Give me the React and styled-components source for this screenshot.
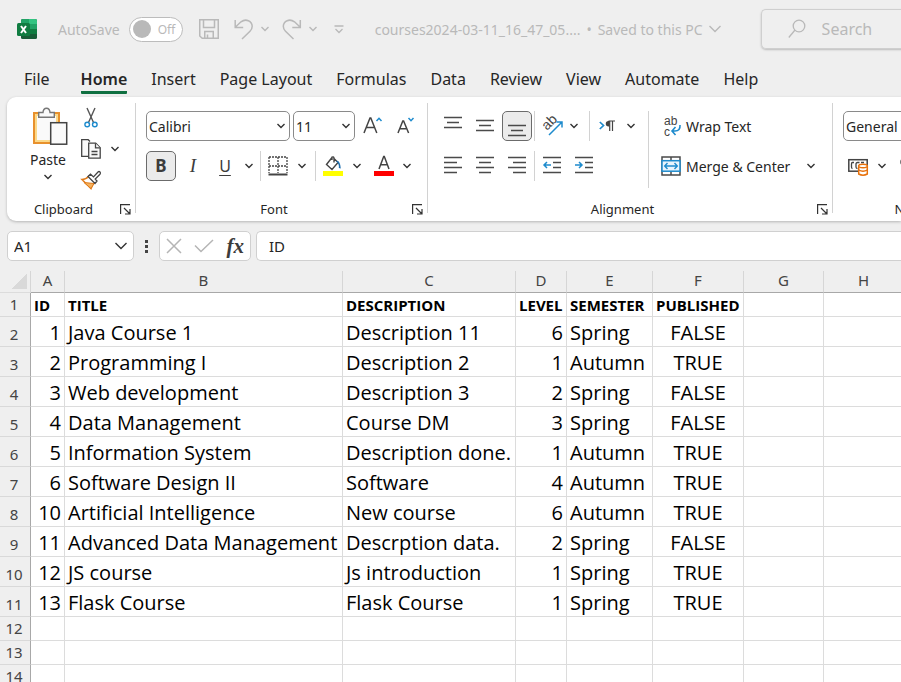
import React from 'react';
import styled, { createGlobalStyle, css } from 'styled-components';

const GlobalStyle = createGlobalStyle`
  *, *::before, *::after { box-sizing: border-box; }
  html, body { margin: 0; padding: 0; height: 100%; overflow: hidden; }
  body { background: #efefef; color: #262626; font-family: "Noto Sans", "Open Sans", sans-serif; }
  button, input, select { font: inherit; color: inherit; margin: 0; padding: 0; border: 0; background: none; }
  svg { display: block; flex: none; overflow: visible; }
`;

const Window = styled.div`
  display: flex;
  flex-direction: column;
  height: 100vh;
  overflow: hidden;
  background: #efefef;
`;

/* ---------- title bar ---------- */

const TitleBar = styled.header`
  display: flex;
  align-items: center;
  flex: none;
  height: 58px;
  padding-left: 17px;
  font-size: 14px;
  color: #b9b9b9;
  white-space: nowrap;
`;

const AutoSave = styled.label`
  display: flex;
  align-items: center;
  gap: 9px;
  margin-left: 21px;
`;

const Switch = styled.span`
  display: flex;
  align-items: center;
  gap: 7px;
  width: 54px;
  height: 25px;
  padding-left: 3px;
  border: 1px solid #bcbcbc;
  border-radius: 13px;
  background: #fff;
  font-size: 12px;
`;

const SwitchInput = styled.input`
  appearance: none;
  width: 18px;
  height: 18px;
  border-radius: 50%;
  background: #b9b9b9;
`;

const QuickTools = styled.div`
  display: flex;
  align-items: center;
  gap: 6px;
  margin-left: 14px;
`;

const SplitButton = styled.div`
  display: flex;
`;

const QuickButton = styled.button`
  display: flex;
  align-items: center;
  justify-content: center;
  width: ${(p) => p.$width}px;
  height: 30px;
`;

const DocumentButton = styled.button`
  display: flex;
  align-items: center;
  gap: 6px;
  margin-left: 20px;
`;

const SearchBox = styled.label`
  display: flex;
  align-items: center;
  flex: 1 0 138px;
  gap: 16px;
  height: 40px;
  margin-left: 40px;
  padding-left: 26px;
  border: 1px solid #cfcfcf;
  border-right: 0;
  border-radius: 5px 0 0 5px;
  box-shadow: 0 1px 2px #bbb;
`;

const SearchInput = styled.input`
  flex: 1;
  min-width: 0;
  font-size: 16px;
  outline: 0;
  &::placeholder { color: #b9b9b9; opacity: 1; }
`;

/* ---------- tabs ---------- */

const Tabs = styled.nav`
  display: flex;
  align-items: flex-start;
  flex: none;
  gap: 24px;
  height: 39px;
  padding: 9px 0 0 24px;
  font-size: 16px;
  line-height: 24px;
  white-space: nowrap;
`;

const Tab = styled.button`
  height: 27px;
  border-bottom: 3px solid transparent;
  ${(p) => p.$first && css`margin-right: 7px;`}
  ${(p) => p.$active && css`
    font-weight: 600;
    border-bottom-color: #107041;
    border-radius: 1px;
  `}
`;

/* ---------- ribbon ---------- */

const Ribbon = styled.section`
  display: flex;
  flex: none;
  height: 124px;
  margin-left: 7px;
  padding: 6px 0 8px;
  border-radius: 9px 0 0 9px;
  background: #fff;
  box-shadow: 0 1px 3px #b5b5b5;
  overflow: hidden;
  font-size: 14px;
  white-space: nowrap;
`;

const Group = styled.section`
  display: flex;
  flex-direction: column;
  flex: none;
  width: ${(p) => p.$width}px;
  border-right: 1px solid #d2d2d2;
`;

const GroupBody = styled.div`
  display: flex;
  flex: 1;
  min-height: 0;
  flex-direction: ${(p) => (p.$stack ? 'column' : 'row')};
  gap: ${(p) => (p.$stack ? 10 : 0)}px;
  padding: ${(p) => p.$top}px 0 0 ${(p) => p.$left}px;
`;

const GroupFooter = styled.footer`
  display: grid;
  grid-template-columns: 1fr 15px;
  align-items: center;
  flex: none;
  height: 18px;
  margin-bottom: -5px;
  font-size: 13px;
  line-height: 18px;
  text-align: center;
`;

const ToolRow = styled.div`
  display: flex;
  align-items: center;
  height: 30px;
  gap: ${(p) => p.$gap || 0}px;
`;

const ToolColumn = styled.div`
  display: flex;
  flex-direction: column;
  align-items: flex-start;
  flex: none;
  gap: ${(p) => p.$gap}px;
  ${(p) => p.$width && css`width: ${p.$width}px;`}
`;

const ToolButton = styled.button`
  display: flex;
  align-items: center;
  justify-content: center;
  flex: none;
  width: ${(p) => p.$width || 30}px;
  height: 30px;
  border: 1px solid transparent;
  border-radius: 5px;
  ${(p) => p.$pressed && css`
    background: #ebebeb;
    border-color: #6b6b6b;
  `}
`;

const LabelledButton = styled.button`
  display: flex;
  align-items: center;
  flex: none;
  gap: 5px;
  height: 30px;
`;

const Letter = styled.span`
  font-size: 17px;
  line-height: 20px;
  color: #3c3c3c;
  ${(p) => p.$bold && css`font-weight: 700;`}
  ${(p) => p.$italic && css`font-family: "Liberation Serif", serif; font-style: italic; font-size: 19px;`}
  ${(p) => p.$underline && css`font-size: 16px; text-decoration: underline; text-underline-offset: 3px;`}
`;

const PasteButton = styled.button`
  display: flex;
  flex-direction: column;
  align-items: center;
  width: 46px;
  height: 84px;
  margin-top: 4px;
  line-height: 20px;
`;

const PasteLabel = styled.span`
  margin: 3px 0 4px;
`;

const Divider = styled.span`
  flex: none;
  width: 1px;
  height: ${(p) => p.$height || 30}px;
  margin: 0 ${(p) => p.$right || 0}px 0 ${(p) => p.$left || 0}px;
  background: #d2d2d2;
`;

const SelectFrame = styled.label`
  display: grid;
  grid-template-columns: 1fr 12px;
  align-items: center;
  flex: none;
  width: ${(p) => p.$width}px;
  height: 30px;
  border: 1px solid #8a8a8a;
  border-radius: 5px;
  background: #fff;
`;

const Select = styled.select`
  grid-area: 1 / 1 / 2 / 3;
  appearance: none;
  width: 100%;
  height: 28px;
  padding-left: 2px;
  outline: 0;
`;

const SelectArrow = styled.span`
  grid-area: 1 / 2;
  pointer-events: none;
`;

/* ---------- formula bar ---------- */

const FormulaBar = styled.div`
  display: flex;
  align-items: center;
  flex: none;
  height: 50px;
  padding-left: 7px;
  font-size: 15px;
`;

const BarBox = styled.div`
  display: flex;
  align-items: center;
  justify-content: space-between;
  flex: none;
  width: ${(p) => p.$width}px;
  height: 30px;
  padding: 0 6px;
  border: 1px solid #d0d0d0;
  border-radius: 5px;
  background: #fff;
`;

const NameInput = styled.input`
  flex: 1;
  min-width: 0;
  outline: 0;
`;

const FormulaInput = styled.input`
  flex: 1;
  min-width: 0;
  height: 30px;
  margin-left: 5px;
  padding-left: 12px;
  border: 1px solid #d0d0d0;
  border-right: 0;
  border-radius: 5px 0 0 5px;
  background: #fff;
  outline: 0;
`;

const Dots = styled.span`
  display: flex;
  justify-content: center;
  width: 25px;
`;

const FxLabel = styled.span`
  font: italic 700 21px/24px "Liberation Serif", serif;
  color: #3c3c3c;
`;

/* ---------- sheet ---------- */

const Sheet = styled.main`
  flex: 1;
  min-height: 0;
  overflow: hidden;
`;

const Table = styled.table`
  table-layout: fixed;
  width: 100%;
  min-width: 904px;
  border-collapse: separate;
  border-spacing: 0;
  background: #fff;
`;

const Col = styled.col`
  width: ${(p) => p.$width}px;
`;

const ColumnHead = styled.th`
  height: 22px;
  padding: 0 0 2px;
  background: #efefef;
  border-bottom: 1px solid #a8a8a8;
  border-right: 1px solid #d6d6d6;
  font-size: 15px;
  font-weight: 400;
  line-height: 19px;
  color: #444;
  ${(p) => p.$edge && css`border-right-color: transparent;`}
`;

const Corner = styled.td`
  padding: 0 3px 3px 0;
  background: #efefef;
  border-bottom: 1px solid #dcdcdc;
  border-right: 1px solid #d6d6d6;
  vertical-align: bottom;
`;

const CornerMark = styled.span`
  display: block;
  width: 15px;
  height: 15px;
  margin-left: auto;
  background: linear-gradient(135deg, transparent 50%, #d9d9d9 50%);
`;

const RowHead = styled.th`
  padding: 0 2px 2px 0;
  background: #efefef;
  border-bottom: 1px solid #d9d9d9;
  border-right: 1px solid #a8a8a8;
  font-size: 15px;
  font-weight: 400;
  line-height: 20px;
  color: #444;
  vertical-align: bottom;
`;

const Cell = styled.td`
  height: ${(p) => (p.$tall ? 30 : 24)}px;
  padding: 2px 3px 0;
  border-right: 1px solid #dcdcdc;
  border-bottom: 1px solid #dcdcdc;
  font-family: "Open Sans", "Noto Sans", sans-serif;
  font-size: ${(p) => (p.$bold ? 15 : 20)}px;
  font-weight: ${(p) => (p.$bold ? 700 : 400)};
  line-height: ${(p) => (p.$tall ? 27 : 21)}px;
  text-align: ${(p) => p.$align || 'left'};
  color: #000;
  white-space: nowrap;
`;

/* ---------- icons ---------- */

const IconText = styled.text`
  font-family: "Liberation Sans", sans-serif;
  font-size: ${(p) => p.$size}px;
  fill: #444;
`;

const Chevron = ({ size = 8, color = '#333', weight = 1.4 }) => (
  <svg width={size} height={size / 2 + 2} viewBox={`0 0 ${size} ${size / 2 + 2}`} fill="none" stroke={color} strokeWidth={weight}>
    <path d={`M.5 1 L${size / 2} ${size / 2 + 0.5} L${size - 0.5} 1`} />
  </svg>
);

const ExcelLogo = () => (
  <svg width="20" height="20" viewBox="0 0 20 20">
    <rect x="4" width="16" height="20" rx="1.5" fill="#185c37" />
    <path d="M4 1.5Q4 0 5.500 0H12V5H4z" fill="#21a366" />
    <path d="M12 0h6.500Q20 0 20 1.500V5h-8z" fill="#33c481" />
    <path d="M4 5h8v5H4z" fill="#107c41" />
    <path d="M12 5h8v5h-8z" fill="#21a366" />
    <path d="M12 10h8v5h-8z" fill="#107c41" />
    <rect y="4" width="13" height="13" rx="1.500" fill="#107c41" />
    <path d="M4 7l5 7M9 7l-5 7" stroke="#fff" strokeWidth="2" />
  </svg>
);

const SaveIcon = () => (
  <svg width="20" height="20" viewBox="0 0 20 20" fill="none" stroke="#b9b9b9" strokeWidth="1.500">
    <path d="M.75.75h18.500v18.500H3.200L.75 17zM4.500.75V8.500h11V.75M5.750 19V12.500h8.500V19M8.500 19v-3.500" />
  </svg>
);

const UndoIcon = () => (
  <svg width="20" height="21" viewBox="0 0 20 21" fill="none" stroke="#b9b9b9" strokeWidth="1.500">
    <path d="M1.200 1v7.500h8M1.500 8L7 2.800C12-.8 18 2 18.200 7.300c0 2.200-.9 3.600-2.200 4.900L8 20" />
  </svg>
);

const RedoIcon = () => (
  <svg width="20" height="21" viewBox="0 0 20 21" fill="none" stroke="#b9b9b9" strokeWidth="1.500">
    <path d="M18.300 1v7.500h-8M18 8l-5.500-5.200C7.500-.8 1.500 2 1.300 7.300c0 2.200.9 3.600 2.200 4.900l8 7.800" />
  </svg>
);

const CustomizeIcon = () => (
  <svg width="10" height="9" viewBox="0 0 10 9" fill="none" stroke="#b9b9b9" strokeWidth="1.300">
    <path d="M.5 1h9M1.500 4L5 7.500 8.500 4" />
  </svg>
);

const SearchIcon = () => (
  <svg width="18" height="20" viewBox="0 0 18 20" fill="none" stroke="#b9b9b9" strokeWidth="1.300">
    <circle cx="11" cy="7" r="5.800" />
    <path d="M7 11L.8 18.500" />
  </svg>
);

const PasteIcon = () => (
  <svg width="36" height="40" viewBox="0 0 36 40" fill="none">
    <rect x="4" y="6" width="25" height="30" fill="#fff" stroke="#e8912d" strokeWidth="2" />
    <rect x="6" y="8" width="21" height="26" fill="#fafafa" stroke="#fbd98a" strokeWidth="2" />
    <path d="M8.700 10.200V5.500H13C13.200 2.800 14.500 1.200 16.500 1.200s3.300 1.600 3.500 4.300h4.300v4.700z" fill="#fafafa" stroke="#777" strokeWidth="1.400" />
    <rect x="20.700" y="15.700" width="16" height="21.500" fill="#fafafa" stroke="#444" strokeWidth="1.500" />
  </svg>
);

const CutIcon = () => (
  <svg width="14" height="20" viewBox="0 0 14 20" fill="none" strokeWidth="1.400">
    <path d="M3 0l6.500 14.500M11 0L4.500 14.500" stroke="#555" />
    <circle cx="3.200" cy="16.500" r="2.300" stroke="#1e8bcd" />
    <circle cx="10.800" cy="16.500" r="2.300" stroke="#1e8bcd" />
  </svg>
);

const CopyIcon = () => (
  <svg width="20" height="20" viewBox="0 0 20 20" fill="#fafafa" stroke="#444" strokeWidth="1.300">
    <path d="M7 17.300H.7V.7h6.500L9 2.500" />
    <path d="M7.700 4.200h7l4.500 4.500v10.500H7.700z" />
    <path d="M14.500 4.200v4.700h4.700M10.500 12.500h6M10.500 15.500h6" />
  </svg>
);

const BrushIcon = () => (
  <svg width="20" height="20" viewBox="0 0 20 20" fill="none">
    <path d="M1 9.500Q5 9.500 8 6l6.500 6Q11.500 14 10 18.500z" fill="#fff" stroke="#e07b1a" strokeWidth="1.500" />
    <path d="M3 12.500l10 1-3 5z" fill="#f5b25e" stroke="#e07b1a" />
    <path d="M7 6.500l2.500-2.300 3 2.700L17 2q1-1 2 0t0 2.200L14.200 9l1.800 2-2 2.500z" fill="#fff" stroke="#444" strokeWidth="1.300" />
  </svg>
);

const LauncherIcon = () => (
  <svg width="11" height="11" viewBox="0 0 11 11" fill="none" stroke="#333" strokeWidth="1.200">
    <path d="M.6 10V.6H10M4 4l5.500 5.500M10 5v5H5" />
  </svg>
);

const GrowIcon = () => (
  <svg width="20" height="18" viewBox="0 0 20 18" fill="none" strokeWidth="1.500">
    <path d="M1 16L7 1h.8l6 15M3.200 10.500h8.500" stroke="#444" />
    <path d="M13.500 4L16 1.300 18.500 4" stroke="#1e8bcd" />
  </svg>
);

const ShrinkIcon = () => (
  <svg width="18" height="18" viewBox="0 0 18 18" fill="none" strokeWidth="1.500">
    <path d="M1 16L5.800 4h.8l5 12M2.800 11.700h7" stroke="#444" />
    <path d="M11.500 1L14 3.700 16.500 1" stroke="#1e8bcd" />
  </svg>
);

const BorderIcon = () => (
  <svg width="20" height="20" viewBox="0 0 20 20" fill="none" stroke="#444" strokeWidth="1.300">
    <path d="M1 1h18M1 10h18M1 1v16M10 1v16M19 1v16" strokeDasharray="2 1" />
    <path d="M.5 18.500h19" strokeWidth="2" />
  </svg>
);

const FillIcon = () => (
  <svg width="20" height="21" viewBox="0 0 20 21" fill="none">
    <rect y="15" width="20" height="5" fill="#ff0" />
    <path d="M9 1.500L3.500 8.500l5.500 5 6-7-4.500-4.500M11 6.500V2Q10.500.3 9 1.200V4" stroke="#444" strokeWidth="1.400" />
    <path d="M13 5q4-1.500 4.800 7.500l-2-.5Q16.500 8 13 5z" fill="#1d6fb0" />
  </svg>
);

const FontColorIcon = () => (
  <svg width="20" height="21" viewBox="0 0 20 21" fill="none">
    <rect y="15" width="20" height="5" fill="#f00" />
    <path d="M5 13L9.700.5h.6L15 13M6.700 8.700h6.600" stroke="#444" strokeWidth="1.500" />
  </svg>
);

const alignLines = {
  top: [[0, 18, 0], [3, 15, 5], [0, 18, 10]],
  middle: [[0, 18, 3], [3, 15, 8], [0, 18, 13]],
  bottom: [[0, 18, 8], [3, 15, 13], [0, 18, 18]],
  left: [[0, 18, 0], [0, 13, 5], [0, 18, 10], [0, 13, 15]],
  center: [[0, 18, 0], [3, 15, 5], [0, 18, 10], [3, 15, 15]],
  right: [[0, 18, 0], [5, 18, 5], [0, 18, 10], [5, 18, 15]],
  indent: [[0, 18, 0], [10, 18, 5], [10, 18, 10], [0, 18, 15]],
};

const LinesIcon = ({ kind, arrow }) => (
  <svg width="18" height="20" viewBox="0 0 18 20" fill="none">
    {alignLines[kind].map(([from, to, y]) => (
      <path key={y} d={`M${from} ${y + 1.5}H${to}`} stroke="#4a4a4a" strokeWidth="1.500" />
    ))}
    {arrow && (
      <path d={arrow === 'out' ? 'M8 9H1M4 6L1 9l3 3' : 'M0 9h7M4 6l3 3-3 3'} stroke="#1e8bcd" strokeWidth="1.500" />
    )}
  </svg>
);

const OrientationIcon = () => (
  <svg width="24" height="26" viewBox="0 0 24 26">
    <IconText $size={14} transform="translate(7 18) rotate(-45)">ab</IconText>
    <path d="M9 22L21.500 9.500M16.500 9h5.500v5.500" fill="none" stroke="#1e8bcd" strokeWidth="1.500" />
  </svg>
);

const DirectionIcon = () => (
  <svg width="16" height="12" viewBox="0 0 16 12" fill="none">
    <path d="M.8 2L4.500 5.500.8 9" stroke="#1e8bcd" strokeWidth="1.700" />
    <path d="M10.700 11V1M13.500 11V1M9.500 1H16" stroke="#444" strokeWidth="1.200" />
    <path d="M10.500 1H9.500a2.700 2.700 0 000 5.400h1z" fill="#444" />
  </svg>
);

const WrapIcon = () => (
  <svg width="20" height="26" viewBox="0 0 20 26" fill="none">
    <IconText $size={12} x="3" y="12">ab</IconText>
    <IconText $size={12} x="3" y="23">c</IconText>
    <path d="M19 12q.5 6-5 6h-3M14.500 14L11 18l3.500 4" stroke="#1e8bcd" strokeWidth="1.600" />
  </svg>
);

const MergeIcon = () => (
  <svg width="20" height="20" viewBox="0 0 20 20" fill="none">
    <path d="M1 1h18v18H1zM10 1v4M10 15v4" stroke="#4a4a4a" strokeWidth="1.500" />
    <rect x="1" y="4.700" width="18" height="10.500" fill="#e9f4fc" stroke="#1e8bcd" strokeWidth="1.500" />
    <path d="M4 10h12M6.500 7L3.700 10l2.800 3M13.500 7l2.800 3-2.800 3" stroke="#1e8bcd" strokeWidth="1.400" />
  </svg>
);

const AccountingIcon = () => (
  <svg width="20" height="18" viewBox="0 0 20 18" fill="none">
    <rect x=".8" y="2.700" width="18.400" height="11.500" stroke="#444" strokeWidth="1.500" />
    <path d="M6 5.500H4.500Q3.500 5.500 3.500 7v3Q3.500 11.500 4.500 11.500M11.500 5.500h-2q-1.500 0-1.500 1.500v3q0 1.500 1.500 1.500M13 5.500h3" stroke="#444" strokeWidth="1.300" />
    <path d="M10.700 9v8q4.300 2.500 8.600 0V9z" fill="#fff" stroke="#e8720c" strokeWidth="1.500" />
    <ellipse cx="15" cy="9" rx="4.300" ry="1.700" fill="#fff" stroke="#e8720c" strokeWidth="1.500" />
    <path d="M10.700 13q4.300 2.500 8.600 0" stroke="#e8720c" strokeWidth="1.400" />
  </svg>
);

const PercentIcon = () => (
  <svg width="16" height="16" viewBox="0 0 16 16" fill="none" stroke="#444" strokeWidth="1.500">
    <circle cx="4" cy="4" r="3" />
    <circle cx="12" cy="12" r="3" />
    <path d="M13 1L3 15" />
  </svg>
);

const DotsIcon = () => (
  <svg width="3" height="13" viewBox="0 0 3 13" fill="#444">
    <path d="M0 0h3v3H0zM0 5h3v3H0zM0 10h3v3H0z" />
  </svg>
);

const CancelIcon = () => (
  <svg width="16" height="16" viewBox="0 0 16 16" stroke="#b5b5b5" strokeWidth="1.500">
    <path d="M1 1l14 14M15 1L1 15" />
  </svg>
);

const CheckIcon = () => (
  <svg width="20" height="14" viewBox="0 0 20 14" fill="none" stroke="#b5b5b5" strokeWidth="1.500">
    <path d="M1 6.500L7 12.500 19 1" />
  </svg>
);

/* ---------- parts ---------- */

const MoreButton = ({ label, width = 18 }) => (
  <ToolButton $width={width} aria-label={label}><Chevron /></ToolButton>
);

const Dropdown = ({ label, value, width }) => (
  <SelectFrame $width={width}>
    <Select aria-label={label} defaultValue={value}><option>{value}</option></Select>
    <SelectArrow><Chevron /></SelectArrow>
  </SelectFrame>
);

const RibbonGroup = ({ title, width, top = 8, left = 10, stack, launcher = true, children }) => (
  <Group $width={width} aria-label={title}>
    <GroupBody $top={top} $left={left} $stack={stack}>{children}</GroupBody>
    <GroupFooter>
      <span>{title}</span>
      {launcher && <button aria-label={`${title} settings`}><LauncherIcon /></button>}
    </GroupFooter>
  </Group>
);

const tabs = ['File', 'Home', 'Insert', 'Page Layout', 'Formulas', 'Data', 'Review', 'View', 'Automate', 'Help'];

const columns = [
  { name: 'A', width: 34, align: 'right' },
  { name: 'B', width: 278 },
  { name: 'C', width: 173 },
  { name: 'D', width: 51, align: 'right' },
  { name: 'E', width: 86 },
  { name: 'F', width: 91, align: 'center' },
  { name: 'G', width: 80 },
  { name: 'H', width: 80 },
];

const rows = [
  ['ID', 'TITLE', 'DESCRIPTION', 'LEVEL', 'SEMESTER', 'PUBLISHED'],
  ['1', 'Java Course 1', 'Description 11', '6', 'Spring', 'FALSE'],
  ['2', 'Programming I', 'Description 2', '1', 'Autumn', 'TRUE'],
  ['3', 'Web development', 'Description 3', '2', 'Spring', 'FALSE'],
  ['4', 'Data Management', 'Course DM', '3', 'Spring', 'FALSE'],
  ['5', 'Information System', 'Description done.', '1', 'Autumn', 'TRUE'],
  ['6', 'Software Design II', 'Software', '4', 'Autumn', 'TRUE'],
  ['10', 'Artificial Intelligence', 'New course', '6', 'Autumn', 'TRUE'],
  ['11', 'Advanced Data Management', 'Descrption data.', '2', 'Spring', 'FALSE'],
  ['12', 'JS course', 'Js introduction', '1', 'Spring', 'TRUE'],
  ['13', 'Flask Course', 'Flask Course', '1', 'Spring', 'TRUE'],
  [],
  [],
  [],
];

export default function App() {
  return (
    <Window>
      <GlobalStyle />
      <TitleBar>
        <ExcelLogo />
        <AutoSave>
          AutoSave
          <Switch><SwitchInput type="checkbox" role="switch" />Off</Switch>
        </AutoSave>
        <QuickTools>
          <QuickButton $width={24} aria-label="Save"><SaveIcon /></QuickButton>
          <SplitButton>
            <QuickButton $width={34} aria-label="Undo"><UndoIcon /></QuickButton>
            <QuickButton $width={8} aria-label="Undo history"><Chevron color="#b9b9b9" /></QuickButton>
          </SplitButton>
          <SplitButton>
            <QuickButton $width={34} aria-label="Redo"><RedoIcon /></QuickButton>
            <QuickButton $width={8} aria-label="Redo history"><Chevron color="#b9b9b9" /></QuickButton>
          </SplitButton>
          <QuickButton $width={32} aria-label="Customize quick access"><CustomizeIcon /></QuickButton>
        </QuickTools>
        <DocumentButton>
          <span>courses2024-03-11_16_47_05....</span>
          <span>•</span>
          <span>Saved to this PC</span>
          <Chevron size={12} color="#b9b9b9" />
        </DocumentButton>
        <SearchBox>
          <SearchIcon />
          <SearchInput type="search" aria-label="Search" placeholder="Search" />
        </SearchBox>
      </TitleBar>

      <Tabs>
        {tabs.map((tab) => (
          <Tab key={tab} $first={tab === 'File'} $active={tab === 'Home'}>{tab}</Tab>
        ))}
      </Tabs>

      <Ribbon>
        <RibbonGroup title="Clipboard" width={129} top={0} left={18}>
          <PasteButton>
            <PasteIcon />
            <PasteLabel>Paste</PasteLabel>
            <Chevron />
          </PasteButton>
          <ToolColumn $gap={1}>
            <ToolButton $width={40} aria-label="Cut"><CutIcon /></ToolButton>
            <ToolRow>
              <ToolButton $width={40} aria-label="Copy"><CopyIcon /></ToolButton>
              <MoreButton label="Copy options" width={8} />
            </ToolRow>
            <ToolButton $width={40} aria-label="Format Painter"><BrushIcon /></ToolButton>
          </ToolColumn>
        </RibbonGroup>

        <RibbonGroup title="Font" width={292} stack>
          <ToolRow $gap={3}>
            <Dropdown label="Font name" value="Calibri" width={144} />
            <Dropdown label="Font size" value="11" width={62} />
            <ToolButton aria-label="Increase font size"><GrowIcon /></ToolButton>
            <ToolButton aria-label="Decrease font size"><ShrinkIcon /></ToolButton>
          </ToolRow>
          <ToolRow>
            <ToolButton $pressed aria-label="Bold"><Letter $bold>B</Letter></ToolButton>
            <ToolButton $width={34} aria-label="Italic"><Letter $italic>I</Letter></ToolButton>
            <ToolButton aria-label="Underline"><Letter $underline>U</Letter></ToolButton>
            <MoreButton label="Underline options" />
            <Divider $left={2} $right={2} />
            <ToolButton aria-label="Borders"><BorderIcon /></ToolButton>
            <MoreButton label="Border options" />
            <Divider $left={4} $right={2} />
            <ToolButton aria-label="Fill Color"><FillIcon /></ToolButton>
            <MoreButton label="Fill options" />
            <ToolButton $width={36} aria-label="Font Color"><FontColorIcon /></ToolButton>
            <MoreButton label="Font color options" width={10} />
          </ToolRow>
        </RibbonGroup>

        <RibbonGroup title="Alignment" width={405}>
          <ToolColumn $gap={10} $width={210}>
            <ToolRow $gap={2}>
              <ToolButton aria-label="Top Align"><LinesIcon kind="top" /></ToolButton>
              <ToolButton aria-label="Middle Align"><LinesIcon kind="middle" /></ToolButton>
              <ToolButton $pressed aria-label="Bottom Align"><LinesIcon kind="bottom" /></ToolButton>
              <Divider />
              <ToolButton aria-label="Orientation"><OrientationIcon /></ToolButton>
              <MoreButton label="Orientation options" width={10} />
              <Divider $left={8} />
              <ToolButton aria-label="Text direction"><DirectionIcon /></ToolButton>
              <MoreButton label="Direction options" width={14} />
            </ToolRow>
            <ToolRow $gap={2}>
              <ToolButton aria-label="Align Left"><LinesIcon kind="left" /></ToolButton>
              <ToolButton aria-label="Center"><LinesIcon kind="center" /></ToolButton>
              <ToolButton aria-label="Align Right"><LinesIcon kind="right" /></ToolButton>
              <Divider />
              <ToolButton aria-label="Decrease Indent"><LinesIcon kind="indent" arrow="out" /></ToolButton>
              <ToolButton aria-label="Increase Indent"><LinesIcon kind="indent" arrow="in" /></ToolButton>
            </ToolRow>
          </ToolColumn>
          <Divider $height={77} $right={12} />
          <ToolColumn $gap={10}>
            <LabelledButton><WrapIcon />Wrap Text</LabelledButton>
            <ToolRow $gap={12}>
              <LabelledButton><MergeIcon />Merge &amp; Center</LabelledButton>
              <MoreButton label="Merge options" />
            </ToolRow>
          </ToolColumn>
        </RibbonGroup>

        <RibbonGroup title="Number" width={190} stack launcher={false}>
          <Dropdown label="Number format" value="General" width={150} />
          <ToolRow>
            <ToolButton aria-label="Accounting format"><AccountingIcon /></ToolButton>
            <MoreButton label="Accounting options" />
            <ToolButton $width={34} aria-label="Percent"><PercentIcon /></ToolButton>
          </ToolRow>
        </RibbonGroup>
      </Ribbon>

      <FormulaBar>
        <BarBox $width={127}>
          <NameInput aria-label="Name box" defaultValue="A1" />
          <Chevron size={12} />
        </BarBox>
        <Dots><DotsIcon /></Dots>
        <BarBox $width={92}>
          <button aria-label="Cancel"><CancelIcon /></button>
          <button aria-label="Enter"><CheckIcon /></button>
          <button aria-label="Insert function"><FxLabel>fx</FxLabel></button>
        </BarBox>
        <FormulaInput aria-label="Formula" defaultValue="ID" />
      </FormulaBar>

      <Sheet>
        <Table>
          <colgroup>
            <Col $width={31} />
            {columns.map((c) => <Col key={c.name} $width={c.width} />)}
            <col />
          </colgroup>
          <thead>
            <tr>
              <Corner><CornerMark /></Corner>
              {columns.map((c) => <ColumnHead key={c.name} scope="col">{c.name}</ColumnHead>)}
              <ColumnHead $edge aria-hidden="true" />
            </tr>
          </thead>
          <tbody>
            {rows.map((row, r) => {
              const tall = r > 0 && row.length > 0;
              return (
                <tr key={r}>
                  <RowHead scope="row">{r + 1}</RowHead>
                  {columns.map((c, i) => (
                    <Cell key={c.name} $tall={tall} $bold={r === 0} $align={r > 0 ? c.align : 'left'}>
                      {row[i]}
                    </Cell>
                  ))}
                  <Cell $tall={tall} />
                </tr>
              );
            })}
          </tbody>
        </Table>
      </Sheet>
    </Window>
  );
}
